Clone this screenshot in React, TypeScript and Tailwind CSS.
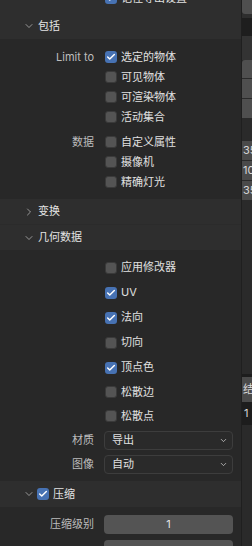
import { ChevronDown, ChevronRight, Check } from "lucide-react";

function Box({ on }: { on?: boolean }) {
  return on ? (
    <div className="w-[12px] h-[12px] rounded-[3px] bg-[#4772b3] flex items-center justify-center shrink-0">
      <Check size={10} strokeWidth={3.5} className="text-white" />
    </div>
  ) : (
    <div className="w-[12px] h-[12px] rounded-[3px] bg-[#545454] border border-[#3a3a3a] shrink-0" />
  );
}

function Row({ label, text, on, h }: { label?: string; text: string; on?: boolean; h: string }) {
  return (
    <div className={`flex items-center ${h}`}>
      <div className="w-[95px] pr-[1px] text-right text-[#bdbdbd]">{label}</div>
      <div className="ml-[10px] flex items-center gap-[4px]">
        <Box on={on} />
        <span className="text-[#e0e0e0]">{text}</span>
      </div>
    </div>
  );
}

function Header({ title, open, check, h }: { title: string; open?: boolean; check?: boolean; h: string }) {
  return (
    <div className={`flex items-center bg-[#2e2e2e] pl-[23px] text-[#e4e4e4] ${h}`}>
      {open ? (
        <ChevronDown size={12} strokeWidth={1.3} className="text-[#cfcfcf]" />
      ) : (
        <ChevronRight size={12} strokeWidth={1.3} className="text-[#cfcfcf]" />
      )}
      {check && (
        <div className="ml-[2px]">
          <Box on />
        </div>
      )}
      <span className={check ? "ml-[4px]" : "ml-[3px]"}>{title}</span>
    </div>
  );
}

function Select({ label, value }: { label: string; value: string }) {
  return (
    <div className="flex items-center h-[24px]">
      <div className="w-[95px] pr-[1px] text-right text-[#bdbdbd]">{label}</div>
      <div className="ml-[9px] w-[129px] h-[19px] rounded-[4px] border border-[#3d3d3d] bg-[#2a2a2a] flex items-center justify-between pl-[7px] pr-[4px]">
        <span className="text-[#e0e0e0]">{value}</span>
        <ChevronDown size={9} strokeWidth={2} className="text-[#d0d0d0]" />
      </div>
    </div>
  );
}

export default function App() {
  return (
    <div className="w-[252px] h-[546px] overflow-hidden flex items-start bg-[#282828] text-[11px] leading-none font-['Inter','Noto_Sans_CJK_SC',sans-serif]">
      {/* Main panel */}
      <div className="w-[241px] shrink-0">
        <div className="h-[13px] bg-[#2e2e2e] overflow-hidden">
          <div className="mt-[-8px] h-[12px] flex items-center pl-[105px] gap-[4px]">
            <Box on />
            <span className="text-[#e0e0e0]">记住导出设置</span>
          </div>
        </div>

        {/* 包括 */}
        <Header title="包括" open h="h-[26px]" />
        <div className="pt-[8px] pb-[7px]">
          <Row label="Limit to" text="选定的物体" on h="h-[20px]" />
          <Row text="可见物体" h="h-[20px]" />
          <Row text="可渲染物体" h="h-[20px]" />
          <Row text="活动集合" h="h-[20px]" />
          <div className="h-[5px]" />
          <Row label="数据" text="自定义属性" h="h-[20px]" />
          <Row text="摄像机" h="h-[20px]" />
          <Row text="精确灯光" h="h-[20px]" />
        </div>

        {/* 变换 */}
        <Header title="变换" h="h-[25px]" />
        <div className="h-[1px] bg-[#2b2b2b]" />

        {/* 几何数据 */}
        <Header title="几何数据" open h="h-[25px]" />
        <div className="pt-[5px] pb-[5px]">
          <Row text="应用修改器" h="h-[25px]" />
          <Row text="UV" on h="h-[25px]" />
          <Row text="法向" on h="h-[25px]" />
          <Row text="切向" h="h-[25px]" />
          <Row text="顶点色" on h="h-[25px]" />
          <Row text="松散边" h="h-[24px]" />
          <Row text="松散点" h="h-[24px]" />
          <Select label="材质" value="导出" />
          <Select label="图像" value="自动" />
        </div>

        {/* 压缩 */}
        <Header title="压缩" open check h="h-[26px]" />
        <div className="pt-[8px]">
          <div className="flex items-center h-[19px]">
            <div className="w-[95px] pr-[1px] text-right text-[#bdbdbd]">压缩级别</div>
            <div className="ml-[9px] w-[129px] h-[19px] rounded-[4px] bg-[#545454] flex items-center justify-center text-[#e4e4e4]">
              1
            </div>
          </div>
          <div className="mt-[6px] ml-[104px] w-[129px] h-[19px] rounded-[4px] bg-[#545454]" />
        </div>
      </div>

      <div className="w-[1px] h-[546px] shrink-0 bg-[#1f1f1f]" />

      {/* Right strip (neighbouring panel) */}
      <div className="w-[10px] h-[546px] shrink-0 bg-[#2a2a2a] text-[#d8d8d8] overflow-hidden whitespace-nowrap">
        <div className="h-[14px] bg-[#4f4f4f] rounded-bl-[3px]" />
        <div className="h-[4px] bg-[#2e2e2e]" />
        <div className="h-[18px] bg-[#1e1e1e]" />
        <div className="h-[24px] bg-[#333333]" />
        <div className="h-[18px] bg-[#4f4f4f] rounded-tl-[3px]" />
        <div className="h-[1px]" />
        <div className="h-[19px] bg-[#4f4f4f]" />
        <div className="h-[1px]" />
        <div className="h-[19px] bg-[#4f4f4f]" />
        <div className="h-[23px]" />
        <div className="h-[19px] bg-[#4a4a4a] flex items-center pl-[1px]">35</div>
        <div className="h-[1px]" />
        <div className="h-[19px] bg-[#4a4a4a] flex items-center pl-[1px]">10</div>
        <div className="h-[1px]" />
        <div className="h-[19px] bg-[#4a4a4a] flex items-center pl-[1px]">35</div>
        <div className="h-[174px]" />
        <div className="h-[3px] bg-[#1d1d1d]" />
        <div className="h-[25px] bg-[#4a4a4a] flex items-center pl-[1px]">结</div>
        <div className="h-[23px] bg-[#1d1d1d] flex items-center pl-[2px]">1</div>
      </div>
    </div>
  );
}
